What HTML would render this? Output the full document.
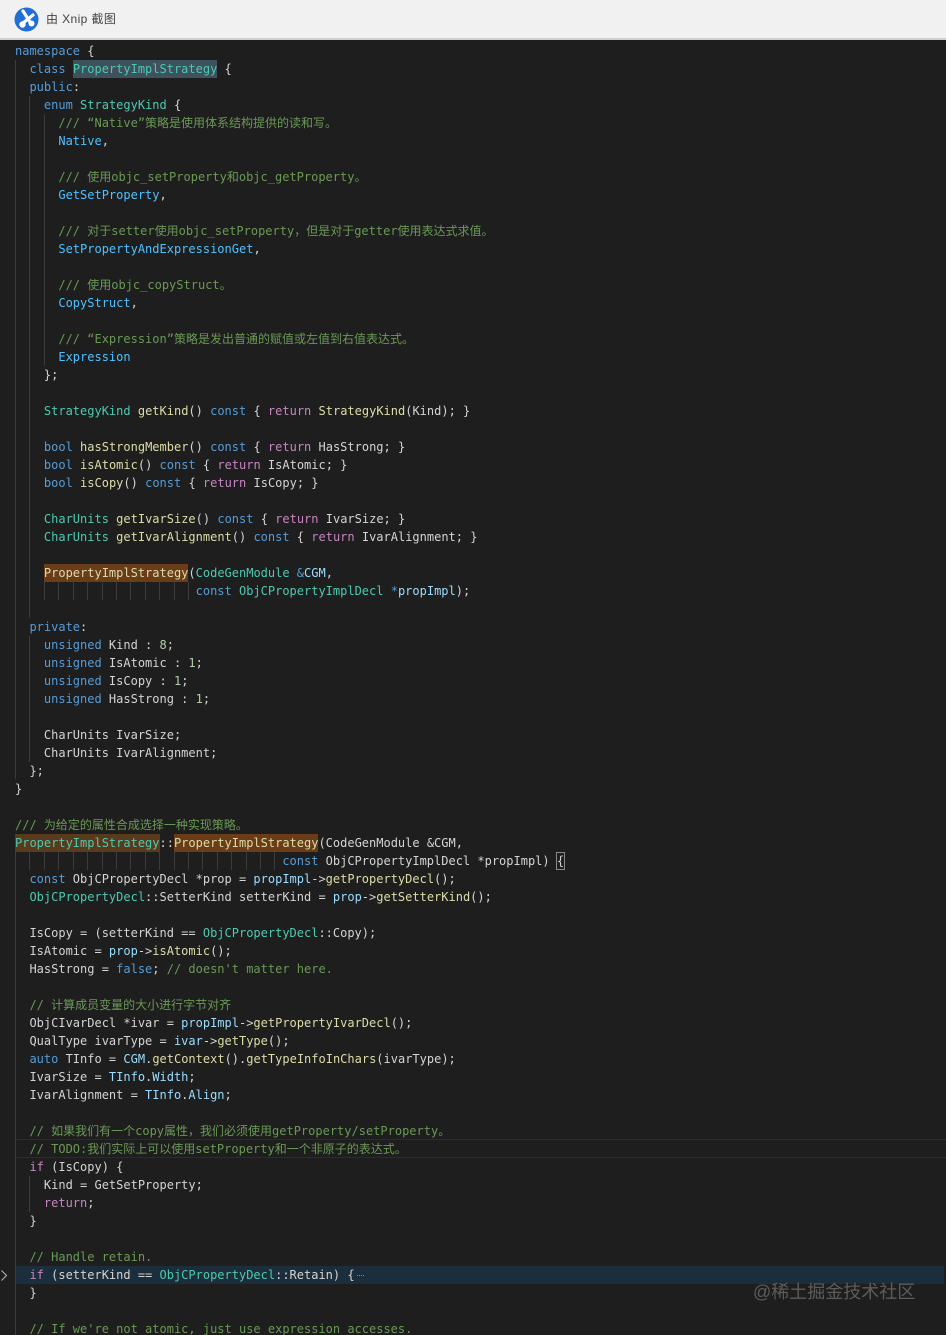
<!DOCTYPE html>
<html><head><meta charset="utf-8">
<style>
html,body{margin:0;padding:0;background:#1e1e1e}
#p{position:relative;width:946px;height:1335px;overflow:hidden;background:#1e1e1e}
#bar{position:absolute;left:0;top:0;width:946px;height:38px;background:#f1f1f1;border-bottom:2px solid #cfcfcf}
#bar span{position:absolute;left:46px;top:10px;font:12px/18px "Liberation Sans","Noto Sans CJK SC",sans-serif;letter-spacing:.4px;color:#444;white-space:pre}
#bar svg{position:absolute;left:14px;top:7px}
#c{position:absolute;left:15px;top:42px;font:12px/18px "DejaVu Sans Mono","Noto Sans CJK SC",monospace;color:#d4d4d4;z-index:2}
#c div{height:18px;line-height:18px;white-space:pre}
.g{position:absolute;width:1px;background:#3c3c3c;z-index:1}
.b{position:absolute;z-index:1}
i{font-style:normal}
.k{color:#569cd6}.t{color:#4ec9b0}.v{color:#9cdcfe}.f{color:#dcdcaa}.m{color:#6a9955}.r{color:#c586c0}.n{color:#b5cea8}.e{color:#4fc1ff}
</style></head><body><div id="p">
<div id="bar"><svg width="25" height="25" viewBox="0 0 25 25"><circle cx="12.5" cy="12.5" r="12" fill="#1f6fd6"/><path d="M9 4 L16 15 M19 8 L9 16" stroke="#fff" stroke-width="3.2" stroke-linecap="round" fill="none"/><circle cx="8.5" cy="17.5" r="3.2" fill="#fff"/><circle cx="17.5" cy="16.5" r="3" fill="#fff"/></svg><span>由 Xnip 截图</span></div>

<div class="b" style="left:73px;top:60px;width:144px;height:18px;background:#3f515c"></div>
<div class="b" style="left:44px;top:564px;width:144px;height:18px;background:#6a3c17"></div>
<div class="b" style="left:15px;top:834px;width:145px;height:18px;background:#5a3a1c"></div>
<div class="b" style="left:174px;top:834px;width:144px;height:18px;background:#6a3c17"></div>
<div class="b" style="left:556px;top:852px;width:7px;height:16px;border:1px solid #8a8a8a"></div>
<div class="b" style="left:16px;top:1139px;width:930px;height:17px;border-top:1px solid #2c2c2c;border-bottom:1px solid #2c2c2c"></div>
<div class="b" style="left:16px;top:1266px;width:928px;height:18px;background:#1c2d3b"></div>

<div class="g" style="left:15px;top:60px;height:719px"></div>
<div class="g" style="left:15px;top:852px;height:483px"></div>
<div class="g" style="left:29px;top:96px;height:522px"></div>
<div class="g" style="left:29px;top:636px;height:126px"></div>
<div class="g" style="left:44px;top:114px;height:252px"></div>
<div class="g" style="left:44px;top:582px;height:18px"></div>
<div class="g" style="left:58px;top:582px;height:18px"></div>
<div class="g" style="left:73px;top:582px;height:18px"></div>
<div class="g" style="left:87px;top:582px;height:18px"></div>
<div class="g" style="left:102px;top:582px;height:18px"></div>
<div class="g" style="left:116px;top:582px;height:18px"></div>
<div class="g" style="left:130px;top:582px;height:18px"></div>
<div class="g" style="left:145px;top:582px;height:18px"></div>
<div class="g" style="left:159px;top:582px;height:18px"></div>
<div class="g" style="left:174px;top:582px;height:18px"></div>
<div class="g" style="left:188px;top:582px;height:18px"></div>
<div class="g" style="left:29px;top:852px;height:18px"></div>
<div class="g" style="left:44px;top:852px;height:18px"></div>
<div class="g" style="left:58px;top:852px;height:18px"></div>
<div class="g" style="left:73px;top:852px;height:18px"></div>
<div class="g" style="left:87px;top:852px;height:18px"></div>
<div class="g" style="left:102px;top:852px;height:18px"></div>
<div class="g" style="left:116px;top:852px;height:18px"></div>
<div class="g" style="left:130px;top:852px;height:18px"></div>
<div class="g" style="left:145px;top:852px;height:18px"></div>
<div class="g" style="left:159px;top:852px;height:18px"></div>
<div class="g" style="left:174px;top:852px;height:18px"></div>
<div class="g" style="left:188px;top:852px;height:18px"></div>
<div class="g" style="left:202px;top:852px;height:18px"></div>
<div class="g" style="left:217px;top:852px;height:18px"></div>
<div class="g" style="left:231px;top:852px;height:18px"></div>
<div class="g" style="left:246px;top:852px;height:18px"></div>
<div class="g" style="left:260px;top:852px;height:18px"></div>
<div class="g" style="left:274px;top:852px;height:18px"></div>
<div class="g" style="left:29px;top:1176px;height:36px"></div>

<div id="c"><div><i class="k">namespace</i> {</div><div>  <i class="k">class</i> <i class="t">PropertyImplStrategy</i> {</div><div>  <i class="k">public</i>:</div><div>    <i class="k">enum</i> <i class="t">StrategyKind</i> {</div><div>      <i class="m">/// “Native”策略是使用体系结构提供的读和写。</i></div><div>      <i class="e">Native</i>,</div><div> </div><div>      <i class="m">/// 使用objc_setProperty和objc_getProperty。</i></div><div>      <i class="e">GetSetProperty</i>,</div><div> </div><div>      <i class="m">/// 对于setter使用objc_setProperty，但是对于getter使用表达式求值。</i></div><div>      <i class="e">SetPropertyAndExpressionGet</i>,</div><div> </div><div>      <i class="m">/// 使用objc_copyStruct。</i></div><div>      <i class="e">CopyStruct</i>,</div><div> </div><div>      <i class="m">/// “Expression”策略是发出普通的赋值或左值到右值表达式。</i></div><div>      <i class="e">Expression</i></div><div>    };</div><div> </div><div>    <i class="t">StrategyKind</i> <i class="f">getKind</i>() <i class="k">const</i> { <i class="r">return</i> <i class="f">StrategyKind</i>(Kind); }</div><div> </div><div>    <i class="k">bool</i> <i class="f">hasStrongMember</i>() <i class="k">const</i> { <i class="r">return</i> HasStrong; }</div><div>    <i class="k">bool</i> <i class="f">isAtomic</i>() <i class="k">const</i> { <i class="r">return</i> IsAtomic; }</div><div>    <i class="k">bool</i> <i class="f">isCopy</i>() <i class="k">const</i> { <i class="r">return</i> IsCopy; }</div><div> </div><div>    <i class="t">CharUnits</i> <i class="f">getIvarSize</i>() <i class="k">const</i> { <i class="r">return</i> IvarSize; }</div><div>    <i class="t">CharUnits</i> <i class="f">getIvarAlignment</i>() <i class="k">const</i> { <i class="r">return</i> IvarAlignment; }</div><div> </div><div>    <i class="f">PropertyImplStrategy</i>(<i class="t">CodeGenModule</i> <i class="k">&amp;</i><i class="v">CGM</i>,</div><div>                         <i class="k">const</i> <i class="t">ObjCPropertyImplDecl</i> <i class="k">*</i><i class="v">propImpl</i>);</div><div> </div><div>  <i class="k">private</i>:</div><div>    <i class="k">unsigned</i> Kind : <i class="n">8</i>;</div><div>    <i class="k">unsigned</i> IsAtomic : <i class="n">1</i>;</div><div>    <i class="k">unsigned</i> IsCopy : <i class="n">1</i>;</div><div>    <i class="k">unsigned</i> HasStrong : <i class="n">1</i>;</div><div> </div><div>    CharUnits IvarSize;</div><div>    CharUnits IvarAlignment;</div><div>  };</div><div>}</div><div> </div><div><i class="m">/// 为给定的属性合成选择一种实现策略。</i></div><div><i class="t">PropertyImplStrategy</i>::<i class="f">PropertyImplStrategy</i>(CodeGenModule &amp;CGM,</div><div>                                     <i class="k">const</i> ObjCPropertyImplDecl *propImpl) {</div><div>  <i class="k">const</i> ObjCPropertyDecl *prop = <i class="v">propImpl</i>-&gt;<i class="f">getPropertyDecl</i>();</div><div>  <i class="t">ObjCPropertyDecl</i>::SetterKind setterKind = <i class="v">prop</i>-&gt;<i class="f">getSetterKind</i>();</div><div> </div><div>  IsCopy = (setterKind == <i class="t">ObjCPropertyDecl</i>::Copy);</div><div>  IsAtomic = <i class="v">prop</i>-&gt;<i class="f">isAtomic</i>();</div><div>  HasStrong = <i class="k">false</i>; <i class="m">// doesn't matter here.</i></div><div> </div><div>  <i class="m">// 计算成员变量的大小进行字节对齐</i></div><div>  ObjCIvarDecl *ivar = <i class="v">propImpl</i>-&gt;<i class="f">getPropertyIvarDecl</i>();</div><div>  QualType ivarType = <i class="v">ivar</i>-&gt;<i class="f">getType</i>();</div><div>  <i class="k">auto</i> TInfo = <i class="v">CGM</i>.<i class="f">getContext</i>().<i class="f">getTypeInfoInChars</i>(ivarType);</div><div>  IvarSize = <i class="v">TInfo</i>.<i class="v">Width</i>;</div><div>  IvarAlignment = <i class="v">TInfo</i>.<i class="v">Align</i>;</div><div> </div><div>  <i class="m">// 如果我们有一个copy属性，我们必须使用getProperty/setProperty。</i></div><div>  <i class="m">// TODO:我们实际上可以使用setProperty和一个非原子的表达式。</i></div><div>  <i class="r">if</i> (IsCopy) {</div><div>    Kind = GetSetProperty;</div><div>    <i class="r">return</i>;</div><div>  }</div><div> </div><div>  <i class="m">// Handle retain.</i></div><div>  <i class="r">if</i> (setterKind == <i class="t">ObjCPropertyDecl</i>::Retain) {</div><div>  }</div><div> </div><div>  <i class="m">// If we're not atomic, just use expression accesses.</i></div></div>

<div style="position:absolute;left:357px;top:1275px;width:7px;height:0;border-top:1px dotted #8a8a8a;z-index:3"></div>
<svg style="position:absolute;left:0;top:1269px;z-index:3" width="10" height="13" viewBox="0 0 10 13"><path d="M1.5 1.5 L6.5 6.5 L1.5 11.5" stroke="#b8b8b8" stroke-width="1" fill="none"/></svg>
<div style="position:absolute;left:753px;top:1281px;font:18px/22px 'Liberation Sans','Noto Sans CJK SC',sans-serif;color:#5c5c5c;white-space:pre;z-index:4">@稀土掘金技术社区</div>
</div></body></html>
